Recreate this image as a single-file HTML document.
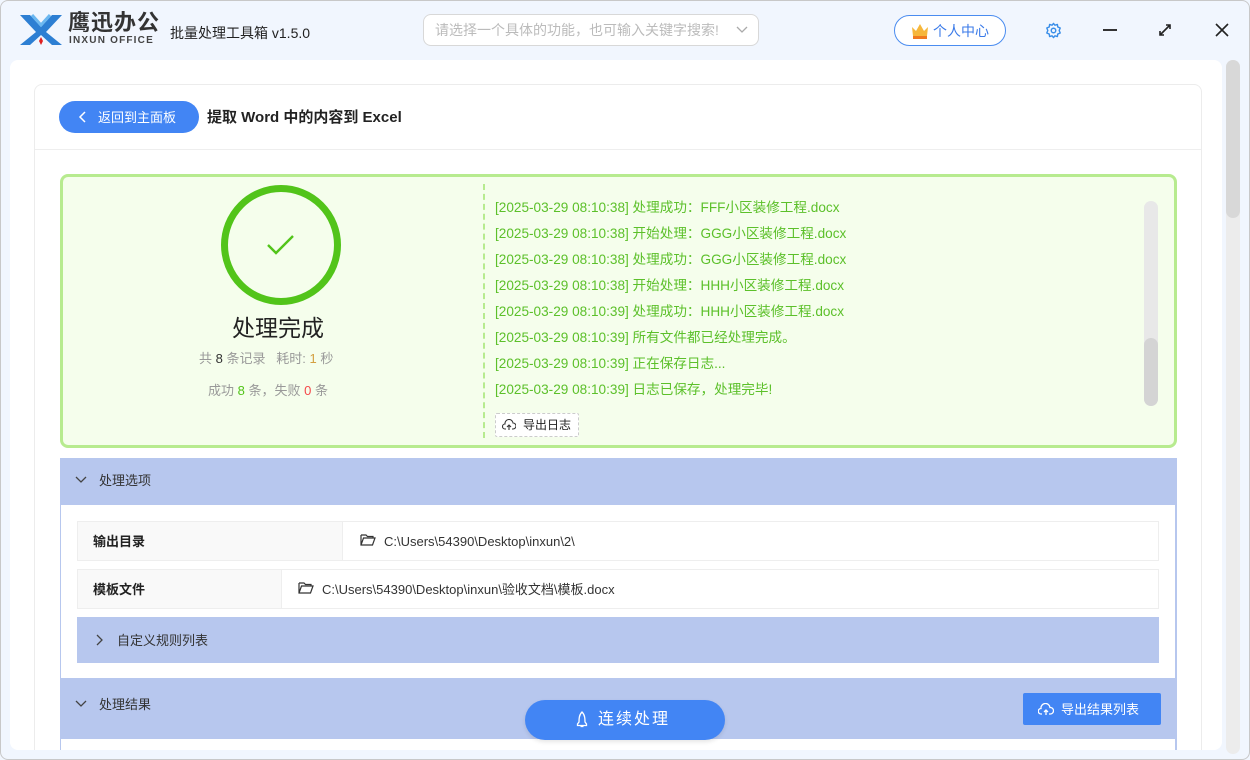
<!DOCTYPE html>
<html><head><meta charset="utf-8"><style>
*{box-sizing:border-box;margin:0;padding:0}
body{width:1250px;height:760px;overflow:hidden;background:#f1f6fe;font-family:"Liberation Sans","Noto Sans CJK SC",sans-serif;position:relative}
.abs{position:absolute}
.t{white-space:nowrap;line-height:1}
.log div{height:26px;line-height:26px;color:#5cc02a;font-size:13.6px;white-space:nowrap}
</style></head><body>
<!-- logo -->
<svg class="abs" style="left:18px;top:13px" width="46" height="34" viewBox="0 0 46 34">
<path d="M2 2 L12 2 L23 14 L34 2 L44 2 L28 19 L44 32 L34 32 L23 22 L12 32 L2 32 L18 19 Z" fill="#2d7fd3"/>
<path d="M14 2 L23 12 L32 2" fill="none" stroke="#6cb8f0" stroke-width="3"/>
<path d="M23 24 L25 28 L23 32 L21 28Z" fill="#e02020"/>
</svg>
<div class="abs t" style="left:68px;top:12px;font-size:22px;font-weight:bold;color:#333;letter-spacing:1px">鹰迅办公</div>
<div class="abs t" style="left:69px;top:36px;font-size:10px;font-weight:bold;color:#444;letter-spacing:1.2px">INXUN OFFICE</div>
<div class="abs t" style="left:170px;top:26px;font-size:14px;color:#222">批量处理工具箱 v1.5.0</div>
<div class="abs" style="left:423px;top:14px;width:336px;height:32px;border:1px solid #d8d8d8;border-radius:8px;background:#fff"></div>
<div class="abs t" style="left:435px;top:23px;font-size:14px;color:#bbb">请选择一个具体的功能，也可输入关键字搜索!</div>
<svg class="abs" style="left:736px;top:25px" width="12" height="10"><path d="M1 2 L6 7 L11 2" fill="none" stroke="#aaa" stroke-width="1.3"/></svg>
<div class="abs" style="left:894px;top:15px;width:112px;height:31px;border:1px solid #4a8cf0;border-radius:16px;background:#fff"></div>
<svg class="abs" style="left:910px;top:22px" width="20" height="18"><path d="M2 5 L6 9 L10 2 L14 9 L18 5 L17 14 L3 14Z" fill="#f6b73c"/><rect x="3" y="14" width="14" height="3" fill="#f07a20"/></svg>
<div class="abs t" style="left:933px;top:24px;font-size:14px;color:#3a7ae8">个人中心</div>
<svg class="abs" style="left:1045px;top:22px" width="17" height="17" viewBox="0 0 24 24"><circle cx="12" cy="12" r="3.2" fill="none" stroke="#3a8ee8" stroke-width="2"/><path d="M12 2 L14 4.5 L17.5 3.5 L18 7 L21.5 8.5 L20 12 L21.5 15.5 L18 17 L17.5 20.5 L14 19.5 L12 22 L10 19.5 L6.5 20.5 L6 17 L2.5 15.5 L4 12 L2.5 8.5 L6 7 L6.5 3.5 L10 4.5Z" fill="none" stroke="#3a8ee8" stroke-width="2" stroke-linejoin="round"/></svg>
<div class="abs" style="left:1103px;top:29px;width:14px;height:2px;background:#333"></div>
<svg class="abs" style="left:1158px;top:23px" width="14" height="14"><path d="M2 12 L12 2 M8 2 H12 V6 M2 8 V12 H6" fill="none" stroke="#222" stroke-width="1.6"/></svg>
<svg class="abs" style="left:1215px;top:23px" width="14" height="14"><path d="M1 1 L13 13 M13 1 L1 13" stroke="#222" stroke-width="1.6"/></svg>
<!-- card -->
<div class="abs" style="left:10px;top:60px;width:1212px;height:690px;background:#fff;border-radius:8px"></div>
<div class="abs" style="left:1226px;top:60px;width:14px;height:694px;background:#ececec;border-radius:7px"></div>
<div class="abs" style="left:1226px;top:60px;width:14px;height:158px;background:#d8d8d8;border-radius:7px"></div>
<div class="abs" style="left:34px;top:84px;width:1168px;height:666px;border:1px solid #ececec;border-bottom:none;border-radius:8px 8px 0 0;background:#fff"></div>
<div class="abs" style="left:35px;top:149px;width:1166px;height:1px;background:#eee"></div>
<div class="abs" style="left:59px;top:101px;width:140px;height:32px;background:#4285f4;border-radius:16px"></div>
<svg class="abs" style="left:78px;top:111px" width="10" height="12"><path d="M7 1 L2 6 L7 11" fill="none" stroke="#fff" stroke-width="1.5"/></svg>
<div class="abs t" style="left:98px;top:110.5px;font-size:13px;color:#fff">返回到主面板</div>
<div class="abs t" style="left:207px;top:109.5px;font-size:15px;font-weight:bold;color:#222">提取 Word 中的内容到 Excel</div>
<!-- green box -->
<div class="abs" style="left:60px;top:174px;width:1117px;height:274px;background:#f5feec;border:3px solid #b7eb8f;border-radius:8px"></div>
<div class="abs" style="left:221px;top:185px;width:120px;height:120px;border:7px solid #52c41a;border-radius:50%"></div>
<svg class="abs" style="left:266px;top:233px" width="30" height="24"><path d="M2 12 L10 20 L27 3" fill="none" stroke="#52c41a" stroke-width="2.4"/></svg>
<div class="abs t" style="left:232px;top:316.5px;font-size:23px;color:#222">处理完成</div>
<div class="abs t" style="left:199px;top:351.5px;font-size:13px;color:#999">共 <b style="color:#333;font-weight:normal">8</b> 条记录 &nbsp; 耗时: <span style="color:#d4a040">1</span> 秒</div>
<div class="abs t" style="left:208px;top:383.5px;font-size:13px;color:#999">成功 <span style="color:#52c41a">8</span> 条，失败 <span style="color:#f5484a">0</span> 条</div>
<div class="abs" style="left:483px;top:184px;height:254px;border-left:2px dashed #b7eb8f"></div>
<div class="abs log" style="left:495px;top:195px">
<div>[2025-03-29 08:10:38] 处理成功：FFF小区装修工程.docx</div>
<div>[2025-03-29 08:10:38] 开始处理：GGG小区装修工程.docx</div>
<div>[2025-03-29 08:10:38] 处理成功：GGG小区装修工程.docx</div>
<div>[2025-03-29 08:10:38] 开始处理：HHH小区装修工程.docx</div>
<div>[2025-03-29 08:10:39] 处理成功：HHH小区装修工程.docx</div>
<div>[2025-03-29 08:10:39] 所有文件都已经处理完成。</div>
<div>[2025-03-29 08:10:39] 正在保存日志...</div>
<div>[2025-03-29 08:10:39] 日志已保存，处理完毕!</div>
</div>
<div class="abs" style="left:495px;top:413px;width:84px;height:24px;border:1px dashed #ccc;background:#fff;border-radius:2px"></div>
<svg class="abs" style="left:502px;top:419px" width="14" height="12"><path d="M4 10 H3 A2.5 2.5 0 0 1 3 5 A4 4 0 0 1 11 4 A3 3 0 0 1 11 10 H10 M7 11 V6 M5 8 L7 6 L9 8" fill="none" stroke="#333" stroke-width="1.1"/></svg>
<div class="abs t" style="left:523px;top:419px;font-size:12px;color:#222">导出日志</div>
<div class="abs" style="left:1144px;top:201px;width:14px;height:205px;background:#e8e8e8;border-radius:7px"></div>
<div class="abs" style="left:1144px;top:338px;width:14px;height:68px;background:#d4d4d4;border-radius:7px"></div>
<!-- options -->
<div class="abs" style="left:60px;top:458px;width:1117px;height:292px;background:#b7c7ee"></div>
<div class="abs" style="left:61px;top:505px;width:1114px;height:173px;background:#fff"></div>
<svg class="abs" style="left:75px;top:475px" width="12" height="10"><path d="M1 2 L6 7 L11 2" fill="none" stroke="#444" stroke-width="1.3"/></svg>
<div class="abs t" style="left:99px;top:473.5px;font-size:13px;color:#333">处理选项</div>
<div class="abs" style="left:77px;top:521px;width:1082px;height:40px;border:1px solid #eee;background:#fff"></div>
<div class="abs" style="left:78px;top:522px;width:265px;height:38px;background:#f9f9f9;border-right:1px solid #eee"></div>
<div class="abs t" style="left:93px;top:534.5px;font-size:13px;font-weight:bold;color:#222">输出目录</div>
<svg class="abs" style="left:360px;top:533px" width="16" height="13"><path d="M1 2 H6 L7.5 3.5 H13 V5 M1 2 V12 H12.5 L15 5 H3.5 L1 12" fill="none" stroke="#333" stroke-width="1.2"/></svg>
<div class="abs t" style="left:384px;top:534.5px;font-size:13px;color:#333">C:\Users\54390\Desktop\inxun\2\</div>
<div class="abs" style="left:77px;top:569px;width:1082px;height:40px;border:1px solid #eee;background:#fff"></div>
<div class="abs" style="left:78px;top:570px;width:204px;height:38px;background:#f9f9f9;border-right:1px solid #eee"></div>
<div class="abs t" style="left:93px;top:582.5px;font-size:13px;font-weight:bold;color:#222">模板文件</div>
<svg class="abs" style="left:298px;top:581px" width="16" height="13"><path d="M1 2 H6 L7.5 3.5 H13 V5 M1 2 V12 H12.5 L15 5 H3.5 L1 12" fill="none" stroke="#333" stroke-width="1.2"/></svg>
<div class="abs t" style="left:322px;top:582.5px;font-size:13px;color:#333">C:\Users\54390\Desktop\inxun\验收文档\模板.docx</div>
<div class="abs" style="left:77px;top:617px;width:1082px;height:46px;background:#b7c7ee"></div>
<svg class="abs" style="left:94px;top:634px" width="10" height="12"><path d="M3 1 L8 6 L3 11" fill="none" stroke="#444" stroke-width="1.3"/></svg>
<div class="abs t" style="left:117px;top:633.5px;font-size:13px;color:#333">自定义规则列表</div>
<svg class="abs" style="left:75px;top:699px" width="12" height="10"><path d="M1 2 L6 7 L11 2" fill="none" stroke="#444" stroke-width="1.3"/></svg>
<div class="abs t" style="left:99px;top:697.5px;font-size:13px;color:#333">处理结果</div>
<div class="abs" style="left:1023px;top:693px;width:138px;height:32px;background:#4285f4;border-radius:2px"></div>
<svg class="abs" style="left:1038px;top:703px" width="16" height="13"><path d="M4 11 H3 A2.7 2.7 0 0 1 3 5.5 A4.5 4.5 0 0 1 12 4.5 A3.2 3.2 0 0 1 12.5 11 H11 M8 12 V6.5 M6 9 L8 7 L10 9" fill="none" stroke="#fff" stroke-width="1.3"/></svg>
<div class="abs t" style="left:1061px;top:702.5px;font-size:13px;color:#fff">导出结果列表</div>
<div class="abs" style="left:61px;top:739px;width:1114px;height:11px;background:#fff"></div>
<div class="abs" style="left:525px;top:700px;width:200px;height:40px;background:#4285f4;border-radius:20px;box-shadow:0 2px 4px rgba(0,0,0,.1)"></div>
<svg class="abs" style="left:575px;top:711px" width="14" height="17"><path d="M7 1 C4 4 4 8 4 11 L2.5 13 V14.5 H11.5 V13 L10 11 C10 8 10 4 7 1Z M5.5 15.5 H8.5" fill="none" stroke="#fff" stroke-width="1.3"/></svg>
<div class="abs t" style="left:598px;top:712px;font-size:16px;color:#fff;letter-spacing:2px">连续处理</div>
<div class="abs" style="left:0;top:0;width:1250px;height:760px;border:1px solid #c8c8c8;border-radius:8px;pointer-events:none"></div>
</body></html>
